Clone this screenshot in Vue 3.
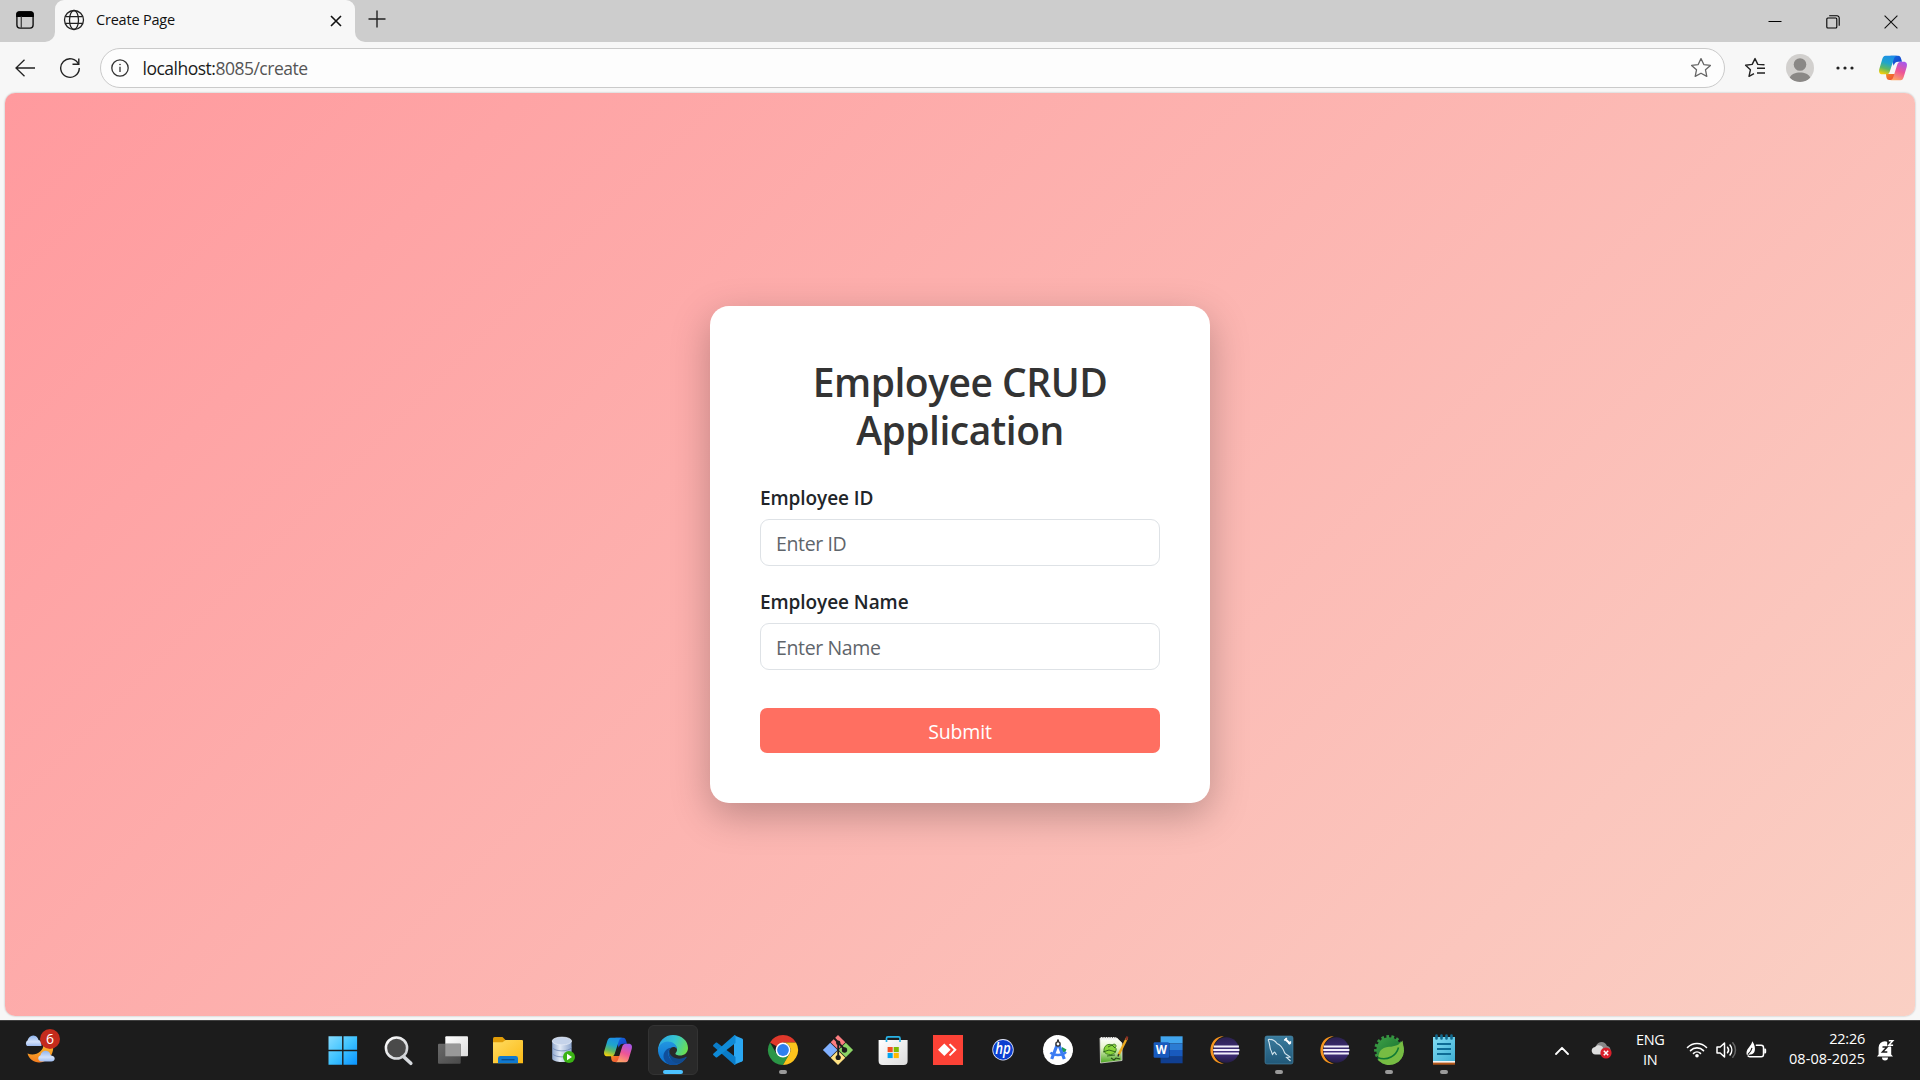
<script setup>
import { ref } from 'vue'

const employeeId = ref('')
const employeeName = ref('')

const apps = [
  { id: 'start' },
  { id: 'search' },
  { id: 'taskview' },
  { id: 'explorer' },
  { id: 'database' },
  { id: 'copilot' },
  { id: 'edge', active: true },
  { id: 'vscode' },
  { id: 'chrome', running: true },
  { id: 'git' },
  { id: 'store' },
  { id: 'anydesk' },
  { id: 'hp' },
  { id: 'studio' },
  { id: 'notepadpp' },
  { id: 'word' },
  { id: 'eclipse' },
  { id: 'mysql', running: true },
  { id: 'eclipse' },
  { id: 'spring', running: true },
  { id: 'notepad', running: true }
]
</script>

<template>
  <div class="screen">
    <header class="tabstrip">
      <div class="strip-left">
        <svg width="20" height="20" viewBox="0 0 20 20">
          <rect x="1.9" y="1.9" width="16.2" height="16.2" rx="3" fill="none" stroke="#111" stroke-width="1.4" />
          <path d="M1.2 7V4.2a3 3 0 0 1 3-3h11.600a3 3 0 0 1 3 3V7z" fill="#000" />
          <path d="M6.300 6.500v11.500" stroke="#444" stroke-width="1.300" />
        </svg>
      </div>
      <div class="tab-slot">
        <div class="tab">
          <svg class="globe" width="22" height="22" viewBox="0 0 22 22" fill="none" stroke="#222" stroke-width="1.300">
            <circle cx="11" cy="11" r="9.500" />
            <ellipse cx="11" cy="11" rx="4.500" ry="9.500" />
            <path d="M2.300 7.600h17.400M2.300 14.400h17.400" />
          </svg>
          <span class="tab-title">Create Page</span>
          <svg class="tab-close" width="12" height="12" viewBox="0 0 12 12" stroke="#111" stroke-width="1.600">
            <path d="M1 1l10 10M11 1L1 11" />
          </svg>
        </div>
      </div>
      <div class="strip-right">
        <svg class="plus" width="18" height="18" viewBox="0 0 18 18" stroke="#222" stroke-width="1.400">
          <path d="M9 .5v17M.5 9h17" />
        </svg>
        <div class="window-controls">
          <svg width="14" height="14" viewBox="0 0 14 14" stroke="#000" stroke-width="1"><path d="M.5 6.500h13" /></svg>
          <svg width="14" height="14" viewBox="0 0 14 14" fill="none" stroke="#000" stroke-width="1.100">
            <rect x=".8" y="3" width="10" height="10" rx="1" />
            <path d="M3.200 .8H11a2.200 2.200 0 0 1 2.200 2.200v7.800" />
          </svg>
          <svg width="14" height="14" viewBox="0 0 14 14" stroke="#111" stroke-width="1.100"><path d="M.6 .6l12.800 12.800M13.400 .6L.6 13.400" /></svg>
        </div>
      </div>
    </header>

    <nav class="toolbar">
      <svg class="back" width="20" height="18" viewBox="0 0 20 18" fill="none" stroke="#222" stroke-width="1.300">
        <path d="M9.500 .7L1 9l8.500 8.300M1 9h19" />
      </svg>
      <svg class="reload" width="22" height="22" viewBox="0 0 22 22" fill="none" stroke="#222" stroke-width="1.400">
        <path d="M19.600 7.500A9.300 9.300 0 1 0 20.300 11" />
        <path d="M19.800 1.500v5.700h-6.300" />
      </svg>
      <div class="address">
        <svg class="info" width="18" height="18" viewBox="0 0 18 18" fill="none" stroke="#333" stroke-width="1.300">
          <circle cx="9" cy="9" r="8.200" />
          <path d="M9 7.800v5.200" />
          <circle cx="9" cy="5.500" r=".5" fill="#333" stroke-width=".6" />
        </svg>
        <span class="url"><b>localhost:</b>8085/create</span>
        <svg class="star" width="22" height="22" viewBox="0 0 22 22" fill="none" stroke="#666" stroke-width="1.300" stroke-linejoin="round">
          <path d="M11 1.600l2.800 6 6.600.8-4.900 4.400 1.300 6.600-5.800-3.200-5.800 3.200 1.300-6.600L1.600 8.400l6.600-.8z" />
        </svg>
      </div>
      <svg class="favs" width="22" height="22" viewBox="0 0 22 22" fill="none" stroke="#222" stroke-width="1.400" stroke-linejoin="round">
        <path d="M20.500 7.700l-6.700-.3L11 1.600 8.200 7.400l-6.600.8 4.800 4.600L5 19.400l5-2.800" />
        <path d="M13 11.200h8M13 16h8" />
      </svg>
      <svg class="profile" width="28" height="28" viewBox="0 0 28 28">
        <clipPath id="avatar"><circle cx="14" cy="14" r="14" /></clipPath>
        <circle cx="14" cy="14" r="14" fill="#d2d0ce" />
        <g clip-path="url(#avatar)" fill="#8a8886">
          <circle cx="14" cy="10.500" r="6.300" />
          <path d="M3.500 24c1.500-4 6-5.600 10.500-5.600s9 1.600 10.500 5.600c-2.500 3-6.500 4-10.500 4s-8-1-10.500-4z" />
        </g>
      </svg>
      <svg class="more" width="18" height="4" viewBox="0 0 18 4" fill="#222">
        <circle cx="2" cy="2" r="1.600" /><circle cx="9" cy="2" r="1.600" /><circle cx="16" cy="2" r="1.600" />
      </svg>
      <svg class="copilot" width="40" height="40" viewBox="0 0 40 40"><use href="#app-copilot" /></svg>
    </nav>

    <div class="viewport">
      <main class="page">
        <form class="card" @submit.prevent>
          <h2>Employee CRUD<br />Application</h2>
          <div class="field">
            <label for="employee-id">Employee ID</label>
            <input id="employee-id" v-model="employeeId" type="text" placeholder="Enter ID" />
          </div>
          <div class="field">
            <label for="employee-name">Employee Name</label>
            <input id="employee-name" v-model="employeeName" type="text" placeholder="Enter Name" />
          </div>
          <button type="submit">Submit</button>
        </form>
      </main>
    </div>

    <footer class="taskbar">
      <div class="weather">
        <svg width="36" height="38" viewBox="0 0 36 38">
          <path d="M28.500 10c3 10-4 19-13 19.500C10 29.700 5 26 3.500 20.500c8 3 16-2 16-9z" fill="url(#moon)" />
          <path d="M3 13a3.500 3.500 0 0 1 .5-5.500C4.500 4.500 6.500 2.300 9.500 2.500c3 .2 4.500 2.500 5 4.500 2 .5 3 2 3 6z" fill="url(#cloud)" />
          <path d="M16.500 28.500a3.300 3.300 0 0 1 0-6.300c.8-3 3-4.600 5.300-4.500 3 .1 4.200 2 4.800 4.500 2 .3 4.100 1.500 4.100 3.300 0 1.800-1.500 3-3.400 3z" fill="url(#cloud)" />
        </svg>
        <span class="badge">6</span>
      </div>

      <div class="apps">
        <div v-for="(app, i) in apps" :key="i" class="app" :class="{ active: app.active, running: app.running }">
          <svg width="40" height="40" viewBox="0 0 40 40"><use :href="'#app-' + app.id" /></svg>
        </div>
      </div>

      <div class="tray">
        <svg class="chevron" width="14" height="9" viewBox="0 0 14 9" fill="none" stroke="#fff" stroke-width="1.800" stroke-linecap="round" stroke-linejoin="round">
          <path d="M1 8l6-6.200L13 8" />
        </svg>
        <svg class="onedrive" width="22" height="20" viewBox="0 0 22 20">
          <path d="M5 6C7 1 14 .5 16 6c3 .5 4 3 3 6H6z" fill="#888" />
          <path d="M4.500 14.500C-.5 14.500-.5 7.500 4 7c2-2.500 6-2.500 8 .5l-2 7z" fill="#ddd" />
          <circle cx="15" cy="13" r="5.600" fill="#d9202b" />
          <path d="M12.800 10.800l4.400 4.400M17.200 10.800l-4.400 4.400" stroke="#fff" stroke-width="1.500" />
        </svg>
        <div class="lang"><span>ENG</span><span>IN</span></div>
        <svg class="wifi" width="22" height="18" viewBox="0 0 22 18" fill="none" stroke="#fff" stroke-width="1.600" stroke-linecap="round">
          <path d="M1.500 6.500a13.300 13.300 0 0 1 19 0M4.500 9.600a9.200 9.200 0 0 1 13 0M7.500 12.400a5 5 0 0 1 7 0" />
          <circle cx="11" cy="14.700" r="1.800" fill="#fff" stroke="none" />
        </svg>
        <svg class="volume" width="21" height="18" viewBox="0 0 21 18" fill="none" stroke="#fff" stroke-width="1.500" stroke-linejoin="round" stroke-linecap="round">
          <path d="M1 6h3.200L8.500 2v14l-4.300-4H1z" />
          <path d="M11.500 6.200a4.500 4.500 0 0 1 0 5.600M14 4a8 8 0 0 1 0 10" />
          <path d="M16.800 1.800a11 11 0 0 1 0 14.400" stroke="#666" />
        </svg>
        <svg class="battery" width="22" height="18" viewBox="0 0 22 18">
          <path d="M9.800 4.300h5.400A2.300 2.300 0 0 1 17.500 6.600v6.800a2.300 2.300 0 0 1-2.300 2.300H3.800a2.300 2.300 0 0 1-2-1.100" fill="none" stroke="#fff" stroke-width="1.500" />
          <path d="M18.200 7.600h.8a1.200 1.200 0 0 1 1.200 1.200v2.400a1.200 1.200 0 0 1-1.200 1.200h-.8z" fill="#fff" />
          <path d="M6.200.3C8.600 3.500 9.400 6.800 8.700 10c-.6 2.600-2.600 3.700-4.700 3.400L2 14.500.6 13.400C-.3 7.500 5.500 5.500 6.200.3z" fill="#fff" />
          <path d="M6 6.800C5.600 9.500 4 11.500 1.800 13.600" stroke="#1c1c1c" stroke-width="1.100" fill="none" />
        </svg>
        <div class="clock"><span class="time">22:26</span><span class="date">08-08-2025</span></div>
        <svg class="bell" width="20" height="22" viewBox="0 0 20 22">
          <path d="M2.600 15.500V8.500a6.300 6.300 0 0 1 12.600 0v7l1.800 2H1z" fill="#fff" />
          <path d="M6 18.600h6a3 3 0 0 1-6 0z" fill="#fff" />
          <path d="M11.200 .5h7v7h-7z" fill="#1c1c1c" />
          <path d="M6.500 8h4.500l-4.500 5h4.800" fill="none" stroke="#1c1c1c" stroke-width="1.600" />
          <path d="M12.800 1.700h4l-4 4.600h4.300" fill="none" stroke="#fff" stroke-width="1.500" />
        </svg>
      </div>
    </footer>

    <svg class="sprite" width="0" height="0" aria-hidden="true">
      <defs>
        <linearGradient id="moon" x1="0" y1="0" x2="0" y2="1"><stop offset="0" stop-color="#fbc02d" /><stop offset="1" stop-color="#f57c1f" /></linearGradient>
        <linearGradient id="cloud" x1="0" y1="0" x2="0" y2="1"><stop offset="0" stop-color="#8fb4ee" /><stop offset=".6" stop-color="#d3e2fb" /><stop offset="1" stop-color="#9ebcf0" /></linearGradient>
        <linearGradient id="win" gradientUnits="userSpaceOnUse" x1="6" y1="6" x2="34" y2="34"><stop offset="0" stop-color="#85dcff" /><stop offset=".5" stop-color="#3fc3ff" /><stop offset="1" stop-color="#0a94ff" /></linearGradient>
        <linearGradient id="lens" x1="0" y1="0" x2="1" y2="1"><stop offset="0" stop-color="#fff" /><stop offset="1" stop-color="#c9ccd0" /></linearGradient>
        <linearGradient id="paper" x1="0" y1="0" x2="1" y2="1"><stop offset="0" stop-color="#fff" /><stop offset="1" stop-color="#dcdcdc" /></linearGradient>
        <linearGradient id="slate" x1="0" y1="0" x2="1" y2="1"><stop offset="0" stop-color="#6a6a6a" /><stop offset="1" stop-color="#4a4a4a" /></linearGradient>
        <linearGradient id="folder" x1="0" y1="0" x2="1" y2="1"><stop offset="0" stop-color="#ffdc62" /><stop offset="1" stop-color="#fbb914" /></linearGradient>
        <linearGradient id="disk" x1="0" y1="0" x2="1" y2="0"><stop offset="0" stop-color="#8fa8cf" /><stop offset=".4" stop-color="#e2eaf6" /><stop offset="1" stop-color="#8ba4cc" /></linearGradient>
        <linearGradient id="cop-left" x1=".6" y1="0" x2=".3" y2="1"><stop offset="0" stop-color="#1d8ee8" /><stop offset=".4" stop-color="#1fa5cc" /><stop offset=".7" stop-color="#5db865" /><stop offset="1" stop-color="#f2cf0b" /></linearGradient>
        <linearGradient id="cop-right" x1=".7" y1="0" x2=".3" y2="1"><stop offset="0" stop-color="#a957e8" /><stop offset=".5" stop-color="#ee5596" /><stop offset="1" stop-color="#ffa765" /></linearGradient>
        <linearGradient id="cop-top" x1="0" y1="0" x2="1" y2="1"><stop offset="0" stop-color="#1470de" /><stop offset="1" stop-color="#1638c9" /></linearGradient>
        <linearGradient id="cop-foot" x1="0" y1="0" x2="1" y2="1"><stop offset="0" stop-color="#f39a1d" /><stop offset="1" stop-color="#ee3f3d" /></linearGradient>
        <linearGradient id="edge-top" x1="0" y1=".3" x2="1" y2=".6"><stop offset="0" stop-color="#2ba5e4" /><stop offset=".5" stop-color="#36c5d0" /><stop offset="1" stop-color="#6be04f" /></linearGradient>
        <linearGradient id="edge-left" x1="0" y1="0" x2="0" y2="1"><stop offset="0" stop-color="#2295e0" /><stop offset="1" stop-color="#0b6fd0" /></linearGradient>
        <linearGradient id="peak" x1="0" y1="0" x2="0" y2="1"><stop offset="0" stop-color="#3a7c9e" /><stop offset="1" stop-color="#215878" /></linearGradient>
        <linearGradient id="note" x1="0" y1="0" x2="1" y2="1"><stop offset="0" stop-color="#83dcf3" /><stop offset="1" stop-color="#3fb0d5" /></linearGradient>
        <linearGradient id="dusk" x1="0" y1="0" x2="0" y2="1"><stop offset="0" stop-color="#2b2150" /><stop offset=".6" stop-color="#43307f" /><stop offset="1" stop-color="#241c46" /></linearGradient>
        <linearGradient id="gear" x1="0" y1="0" x2="1" y2="1"><stop offset="0" stop-color="#3fa046" /><stop offset="1" stop-color="#0e6a2c" /></linearGradient>
        <linearGradient id="grass" x1="0" y1="0" x2="0" y2="1"><stop offset="0" stop-color="#fff" /><stop offset=".4" stop-color="#e6f5c9" /><stop offset="1" stop-color="#4aa51e" /></linearGradient>

        <symbol id="app-start" viewBox="0 0 40 40">
          <path d="M5.500 6.200h13.600v13.600H5.500zM20.500 6.200h13.600v13.600H20.500zM5.500 21.200h13.600v13.600H5.500zM20.500 21.200h13.600v13.600H20.500z" fill="url(#win)" />
        </symbol>
        <symbol id="app-search" viewBox="0 0 40 40">
          <path d="M26 27l6.800 6.300" stroke="#d6d9dd" stroke-width="3.600" stroke-linecap="round" />
          <circle cx="18.500" cy="18" r="10.600" fill="#4a4a4a" stroke="url(#lens)" stroke-width="2.500" />
        </symbol>
        <symbol id="app-taskview" viewBox="0 0 40 40">
          <rect x="12.300" y="6.300" width="22.700" height="20" rx="1" fill="url(#paper)" />
          <rect x="5" y="13.700" width="22.700" height="20" rx="1" fill="url(#slate)" />
          <path d="M12.300 13.700h15.400v12.600H12.300z" fill="#999" />
        </symbol>
        <symbol id="app-explorer" viewBox="0 0 40 40">
          <path d="M5 8.500A1.500 1.500 0 0 1 6.500 7h8L17.500 10v4H5z" fill="#e09c08" />
          <path d="M5 12.200h9.500l3-2.200H34a1 1 0 0 1 1 1v22.300H5z" fill="url(#folder)" />
          <path d="M10 33.300v-5a2.300 2.300 0 0 1 2.300-2.300h15.400a2.300 2.300 0 0 1 2.300 2.300v5z" fill="#1079cf" />
          <path d="M13.500 29.700h13" stroke="#0a4c8c" stroke-width="1.300" />
        </symbol>
        <symbol id="app-database" viewBox="0 0 40 40">
          <path d="M9.200 11v17.500c0 2 4.300 3.500 9.700 3.500s9.700-1.500 9.700-3.500V11z" fill="url(#disk)" />
          <ellipse cx="18.900" cy="11" rx="9.700" ry="3.900" fill="#c5d3ea" stroke="#e8eef8" stroke-width=".7" />
          <path d="M9.200 17.500c3 4.500 16.500 4.500 19.400 0M9.200 23.500c3 4.500 16.500 4.500 19.400 0" fill="none" stroke="#7088b5" stroke-width=".8" />
          <circle cx="26" cy="27" r="6" fill="#3ab314" />
          <path d="M24 23.800l5 3.200-5 3.200z" fill="#fff" />
        </symbol>
        <symbol id="app-copilot" viewBox="0 0 40 40">
          <path d="M17.500 7.700h7.500c2.200 0 2.700 1.500 3.200 3.300l.8 2.800h-3.500c-3 0-4 1.500-4.800 4z" fill="url(#cop-top)" />
          <path d="M13 26h9l2-3.500-2 6c-.9 2.500-2 3.500-4 3.500h-1.500c-2.200 0-2.700-1.300-3.200-3z" fill="url(#cop-foot)" />
          <path d="M12.500 7.700H24c-2 .2-2.700 1.800-3.400 4l-3.800 11.800c-.7 2-1.600 2.800-3.500 2.800H9.400C6.500 26.300 5.500 24 6.300 21l3-10c.6-2 1.500-3.300 3.200-3.300z" fill="url(#cop-left)" />
          <path d="M27.500 32.300H17.300c2-.2 2.600-1.800 3.200-3.700l3.700-11.800c.8-2.300 1.800-3 3.600-3h2.800c2.900 0 4 2.200 3.100 5.200l-3 10c-.6 2-1.500 3.300-3.200 3.300z" fill="url(#cop-right)" />
        </symbol>
        <symbol id="app-edge" viewBox="0 0 40 40">
          <path d="M5 21C5 11 12 5 20 5c9 0 15 6 15 13 0 5-4 7.500-8 7.500-3 0-5-1.200-4.500-2.200 1-1.500 1.500-2 1.500-3.800C24 15 19 12.500 14 13c-5 .5-8 4-9 8z" fill="url(#edge-top)" />
          <path d="M5 21c0-6 5-9.500 9.500-9.500 5.500 0 9.500 3.500 9.500 7.500-2-3-7-2.500-8 2-1 6 4 11 9 13.200A15 15 0 0 1 5 21z" fill="url(#edge-left)" />
          <path d="M18 17.800c-5 3.500-2.700 12.500 4 14.200 5 1 9-1.500 11.300-5C30.500 33 25 35.500 19 35c-5-.5-9-5-8.500-9.500.3-4 3.500-7.200 7.500-7.700z" fill="#104f9c" />
          <path d="M18 17.800c-3 2.500-1.500 9 5 10.500 4 1 8-.2 9.800-1.500.8-.5 1.200.2.8.8C31 31.500 27.500 33.500 24 33c-7-1-11-11-6-15.200z" fill="#114a8d" />
        </symbol>
        <symbol id="app-vscode" viewBox="0 0 40 40">
          <path d="M26 5.200l8 3.300c.7.300 1 .8 1 1.500v20c0 .7-.3 1.200-1 1.500l-8 3.300z" fill="#2aa7f2" />
          <path d="M5.500 14.700l2.200-2c.5-.4 1.100-.3 1.500 0L27.500 27v7.800c-.7.300-1.300 0-1.800-.5L5.500 16.500c-.6-.5-.6-1.200 0-1.800z" fill="#0a7cc8" />
          <path d="M5.500 25.300l2.200 2c.5.400 1.100.3 1.500 0L27.500 13V5.200c-.7-.3-1.300 0-1.800.5L5.500 23.500c-.6.500-.6 1.200 0 1.800z" fill="#0f8ad6" />
        </symbol>
        <symbol id="app-chrome" viewBox="0 0 40 40">
          <path d="M20 20L7 12.500A15 15 0 0 1 33 12.500H20z" fill="#df382b" />
          <path d="M7 12.500a15 15 0 0 0 13 22.500l6.500-11.300L20 20l-6.500 3.700z" fill="#2b9646" />
          <path d="M33 12.500A15 15 0 0 1 20 35l6.500-11.300a7.500 7.500 0 0 0-6.500-11.200z" fill="#fcc31c" />
          <circle cx="20" cy="20" r="7.400" fill="#fff" /><circle cx="20" cy="20" r="5.900" fill="#2e7fee" />
        </symbol>
        <symbol id="app-git" viewBox="0 0 40 40">
          <path d="M20 4.900l7.300 7.300-7.300 7.300-7.300-7.300z" fill="#fb7d80" /><path d="M12.200 12.700l7.300 7.300-7.300 7.300L4.900 20z" fill="#80b0ff" />
          <path d="M27.800 12.700l7.300 7.300-7.300 7.300-7.300-7.300z" fill="#8bd465" /><path d="M20 20.500l7.300 7.300-7.300 7.300-7.300-7.300z" fill="#ffe283" />
          <path d="M15.500 7.500l4.700 5V28M20.200 12.500l6.800 7.500" stroke="#1c1c1c" stroke-width="1.900" fill="none" />
          <circle cx="20.200" cy="12.800" r="2.200" fill="#1c1c1c" /><circle cx="26.500" cy="20" r="2.700" fill="#1c1c1c" /><circle cx="20.200" cy="27.500" r="2.600" fill="#1c1c1c" />
        </symbol>
        <symbol id="app-store" viewBox="0 0 40 40">
          <path d="M5.600 10h29v21a4 4 0 0 1-4 4h-21a4 4 0 0 1-4-4z" fill="url(#paper)" />
          <path d="M13.500 12V8.300A1.500 1.500 0 0 1 15 6.800h10.500A1.500 1.500 0 0 1 27 8.300V12" fill="none" stroke="#28b3e6" stroke-width="1.700" />
          <path d="M14.600 17h5.100v5.100h-5.100z" fill="#f25022" /><path d="M20.700 17h5.100v5.100h-5.100z" fill="#7fba00" />
          <path d="M14.600 23h5.100v5.100h-5.100z" fill="#00a4ef" /><path d="M20.700 23h5.100v5.100h-5.100z" fill="#ffb900" />
        </symbol>
        <symbol id="app-anydesk" viewBox="0 0 40 40">
          <path d="M5 5h30v30H5z" fill="#fc4236" />
          <path d="M16.300 13.500l6.300 6.300-6.300 6.300L10 19.800z" fill="#fff" />
          <path d="M20.800 14.700l1.500-1.200 6.400 6.300-6.400 6.300-1.500-1.200 5-5.100z" fill="#fff" />
        </symbol>
        <symbol id="app-hp" viewBox="0 0 40 40">
          <circle cx="20" cy="19.800" r="10.700" fill="#dfe5fb" /><circle cx="20" cy="19.800" r="9.900" fill="#0a3fd0" />
          <text x="20" y="24.300" text-anchor="middle" font-family="Open Sans, sans-serif" font-size="17" font-weight="600" font-style="italic" fill="#fff" textLength="15.500" lengthAdjust="spacingAndGlyphs">hp</text>
        </symbol>
        <symbol id="app-studio" viewBox="0 0 40 40">
          <circle cx="20" cy="20" r="13.700" fill="#fff" /><circle cx="20" cy="20" r="13.700" fill="none" stroke="#fff" stroke-width="2.600" stroke-dasharray="2.800 1.503" stroke-linecap="round" />
          <path d="M24 17l4.500 2.500-1.500 3-3-1z" fill="#1f9c53" />
          <path d="M19.500 14l-5.800 15M20.500 14l5.800 15" stroke="#3b7cf3" stroke-width="3.200" />
          <path d="M12.500 22.500c3 3.400 12 3.400 15.500-.5" stroke="#3b7cf3" stroke-width="2.600" fill="none" />
          <circle cx="20" cy="14" r="2.100" fill="#fff" stroke="#333" stroke-width="1.400" /><path d="M20 9.500v2.500" stroke="#333" stroke-width="2" />
        </symbol>
        <symbol id="app-notepadpp" viewBox="0 0 40 40">
          <path d="M7 8h17l5 5v17.500L7.500 33z" fill="url(#grass)" stroke="#d9d9d0" stroke-width=".8" />
          <path d="M8 8.500h15" stroke="#eee" stroke-width="3" stroke-dasharray="1.400 1" />
          <path d="M11 21c-.5-5 4-8 8-6 3-2 5 0 3.500 2.500 2 2.500-.5 7-5 7-3 0-6-1-6.500-3.500z" fill="#8bd63c" stroke="#37771b" stroke-width=".9" />
          <path d="M10 22l6-2 7 2M15 17l4-2 3 3M14 26l8-1" stroke="#275c16" stroke-width=".9" fill="none" />
          <path d="M18 28l3 2 2-2 4 1" stroke="#294b18" stroke-width="1.100" fill="none" />
          <path d="M25.500 25L34 8" stroke="#eaa91e" stroke-width="2.400" /><path d="M33 10l1.500-3.500" stroke="#8c2f26" stroke-width="2" /><path d="M25 26.500l.8-2.500" stroke="#333" stroke-width="1.500" />
        </symbol>
        <symbol id="app-word" viewBox="0 0 40 40">
          <path d="M12.600 6.300h22v7h-22z" fill="#41a5ee" /><path d="M12.600 13.300h22v6.700h-22z" fill="#2b7cd3" />
          <path d="M12.600 20h22v6.700h-22z" fill="#185abd" /><path d="M12.600 26.700h22v6.600h-22z" fill="#103f91" />
          <path d="M12.600 13h9.400v16.500h-9.400z" fill="#10386f" opacity=".5" />
          <rect x="5.600" y="12.200" width="15.400" height="15.600" rx="1.300" fill="#185abd" />
          <text x="13.200" y="24.100" text-anchor="middle" font-family="Open Sans, sans-serif" font-size="11.500" font-weight="700" fill="#fff">W</text>
        </symbol>
        <symbol id="app-eclipse" viewBox="0 0 40 40">
          <path d="M19.800 6.200C2 6 2 34 19.800 33.700 5.500 30 5.500 10 19.800 6.200z" fill="#f7941e" />
          <circle cx="22.300" cy="20" r="12.800" fill="url(#dusk)" />
          <path d="M9.700 16.500h25.200M9.200 20h26.200M9.700 23.500h25.200" stroke="#f2effa" stroke-width="1.900" />
        </symbol>
        <symbol id="app-mysql" viewBox="0 0 40 40">
          <rect x="6" y="6" width="28" height="28" rx="2" fill="url(#peak)" stroke="#4d8aa8" stroke-width=".6" />
          <path d="M9 9.500c4-.5 7 1 9 4 4 1.500 6 5 7.500 9 .5 2 3 2 5.500 4.500l-3.500.5 4 3.500M9 9.500c2 3.500 1.500 7 2.500 10 1.500 2 1 3.500 2 5 2-3 2-3.500 4 .5" fill="none" stroke="#d4e5ee" stroke-width="1.100" />
          <path d="M26 9l5.500 5" stroke="#fff" stroke-width="2.200" /><path d="M25.300 10.500l2.500-2.500M29.500 14l2.500-2.500" stroke="#fff" stroke-width="1.600" />
        </symbol>
        <symbol id="app-spring" viewBox="0 0 40 40">
          <circle cx="20" cy="20" r="12.700" fill="url(#gear)" />
          <circle cx="20" cy="20" r="13.400" fill="none" stroke="#369541" stroke-width="3" stroke-dasharray="2.700 2.310" />
          <path d="M33.500 10.500c.5 4 1.500 7 1.500 10A14.800 14.800 0 0 1 9.500 30.500c-1-8 2.500-13 10.500-13.700 6-.3 10.500-1.800 13.500-6.300z" fill="#77bc43" />
          <path d="M8.500 27.500c10 4 19-2 21-10" fill="none" stroke="#0f7a35" stroke-width="1.500" />
        </symbol>
        <symbol id="app-notepad" viewBox="0 0 40 40">
          <path d="M9 31h22v3.700H9z" fill="#b4581b" /><path d="M9 29h22v3.600H9z" fill="#f3f3f3" />
          <path d="M9 7h22v24H9z" fill="url(#note)" />
          <path d="M12.500 5.500v3M17.500 5.500v3M22.500 5.500v3M27.500 5.500v3" stroke="#126a8e" stroke-width="2.600" stroke-linecap="round" />
          <path d="M13 14h14M13 19h14M13 24h14" stroke="#0e6c96" stroke-width="1.900" />
        </symbol>
      </defs>
    </svg>
  </div>
</template>

<style>
body {
  margin: 0;
  overflow: hidden;
}
</style>

<style scoped>
* {
  box-sizing: border-box;
}
.screen {
  display: flex;
  flex-direction: column;
  width: 1920px;
  height: 1080px;
  background: #f7f7f7;
  font-family: "Open Sans", "Noto Sans", sans-serif;
}
svg {
  display: block;
  flex: none;
}
.sprite {
  position: absolute;
}
.tabstrip {
  display: flex;
  height: 42px;
}
.strip-left {
  width: 55px;
  padding: 10px 0 0 15px;
  background: #cdcdcd;
  border-bottom-right-radius: 10px;
}
.tab-slot {
  width: 300px;
  height: 42px;
  background: linear-gradient(#cdcdcd 50%, #f7f7f7 50%);
}
.tab {
  display: flex;
  align-items: center;
  height: 42px;
  padding: 0 13px 2px 8px;
  border-radius: 9px 9px 0 0;
  background: #f7f7f7;
}
.tab-title {
  margin: -1px 0 0 11px;
  font-size: 14.500px;
  letter-spacing: -0.2px;
  color: #111;
}
.tab-close {
  margin: 1px 0 0 auto;
}
.strip-right {
  flex: 1;
  display: flex;
  justify-content: space-between;
  padding: 10px 22px 0 13px;
  background: #cdcdcd;
  border-bottom-left-radius: 10px;
}
.window-controls {
  display: flex;
  gap: 44px;
  padding-top: 4.500px;
}
.toolbar {
  display: flex;
  align-items: center;
  height: 51px;
  padding-left: 15px;
}
.reload {
  margin-left: 24px;
}
.address {
  display: flex;
  align-items: center;
  width: 1625px;
  height: 40px;
  margin-left: 19px;
  padding: 0 12px 0 10px;
  border: 1px solid #cacaca;
  border-radius: 20px;
  background: #fdfdfd;
}
.url {
  margin-left: 13.500px;
  font-size: 17.500px;
  letter-spacing: -0.5px;
  color: #555;
}
.url b {
  font-weight: 400;
  color: #1b1b1b;
}
.star {
  margin-left: auto;
}
.favs {
  margin-left: 19px;
}
.profile {
  margin-left: 20px;
}
.more {
  margin-left: 21.500px;
}
.copilot {
  margin-left: 19.500px;
}
.viewport {
  height: 927px;
  padding: 0 5px 4px;
}
.page {
  display: flex;
  justify-content: center;
  align-items: center;
  height: 923px;
  border-radius: 10px;
  background: linear-gradient(135deg, #ff9a9e, #fad0c4);
  box-shadow: 0 0 2px rgba(0, 0, 0, 0.3);
}
.card {
  width: 500px;
  height: 497px;
  padding: 52px 50px 50px;
  border-radius: 19px;
  background: #fff;
  box-shadow: 0 12px 38px rgba(0, 0, 0, 0.25);
}
h2 {
  margin: 0 0 29px;
  font-size: 39px;
  font-weight: 600;
  line-height: 48px;
  letter-spacing: -0.5px;
  text-align: center;
  color: #333;
}
.field {
  display: flex;
  flex-direction: column;
  gap: 6px;
  margin-bottom: 21px;
}
label {
  font-size: 19px;
  font-weight: 600;
  line-height: 30px;
  letter-spacing: -0.07px;
  color: #212529;
}
input {
  height: 47px;
  padding: 1px 15px 0;
  border: 1px solid #dee2e6;
  border-radius: 9px;
  background: #fff;
  font: 19.500px "Open Sans", "Noto Sans", sans-serif;
  letter-spacing: -0.37px;
  outline: none;
}
input::placeholder {
  color: #5f656b;
  opacity: 1;
}
button {
  width: 400px;
  height: 45px;
  margin-top: 17px;
  padding: 1px 0 0;
  border: 0;
  border-radius: 7px;
  background: #ff6f61;
  font: 19.500px "Open Sans", "Noto Sans", sans-serif;
  letter-spacing: -0.2px;
  color: #fff;
}
.taskbar {
  display: flex;
  height: 60px;
  border-top: 1px solid #404040;
  background: #1c1c1c;
  color: #fff;
}
.weather {
  position: relative;
  width: 315.500px;
  padding: 12px 0 0 24px;
}
.badge {
  position: absolute;
  left: 40px;
  top: 8px;
  width: 20px;
  height: 20px;
  border-radius: 50%;
  background: #c42b1c;
  font-size: 14px;
  line-height: 20px;
  text-align: center;
}
.apps {
  display: flex;
}
.app {
  position: relative;
  display: flex;
  align-items: center;
  justify-content: center;
  width: 50px;
  height: 50px;
  margin: 4px 2.530px;
  border: 1px solid transparent;
  border-radius: 6px;
}
.app.active {
  background: #292929;
  border-color: #333;
}
.app.active::after,
.app.running::after {
  content: "";
  position: absolute;
  bottom: 0;
  width: 8px;
  height: 4px;
  border-radius: 2px;
  background: #9a9a9a;
}
.app.active::after {
  width: 20px;
  background: #4cc2ff;
}
.tray {
  display: flex;
  align-items: center;
  height: 58px;
  padding-left: 84px;
  font-size: 14.500px;
  line-height: 20px;
}
.onedrive {
  margin-left: 22px;
}
.lang {
  display: flex;
  flex-direction: column;
  align-items: center;
  width: 40px;
  margin-left: 17px;
  letter-spacing: -0.4px;
}
.wifi {
  margin-left: 16px;
}
.volume {
  margin-left: 8px;
}
.battery {
  margin-left: 9px;
}
.clock {
  display: flex;
  flex-direction: column;
  align-items: flex-end;
  width: 90px;
  margin: -2px 0 0 7px;
}
.date {
  letter-spacing: 0.050px;
}
.time {
  letter-spacing: -0.2px;
}
.bell {
  margin-left: 11px;
}
</style>
